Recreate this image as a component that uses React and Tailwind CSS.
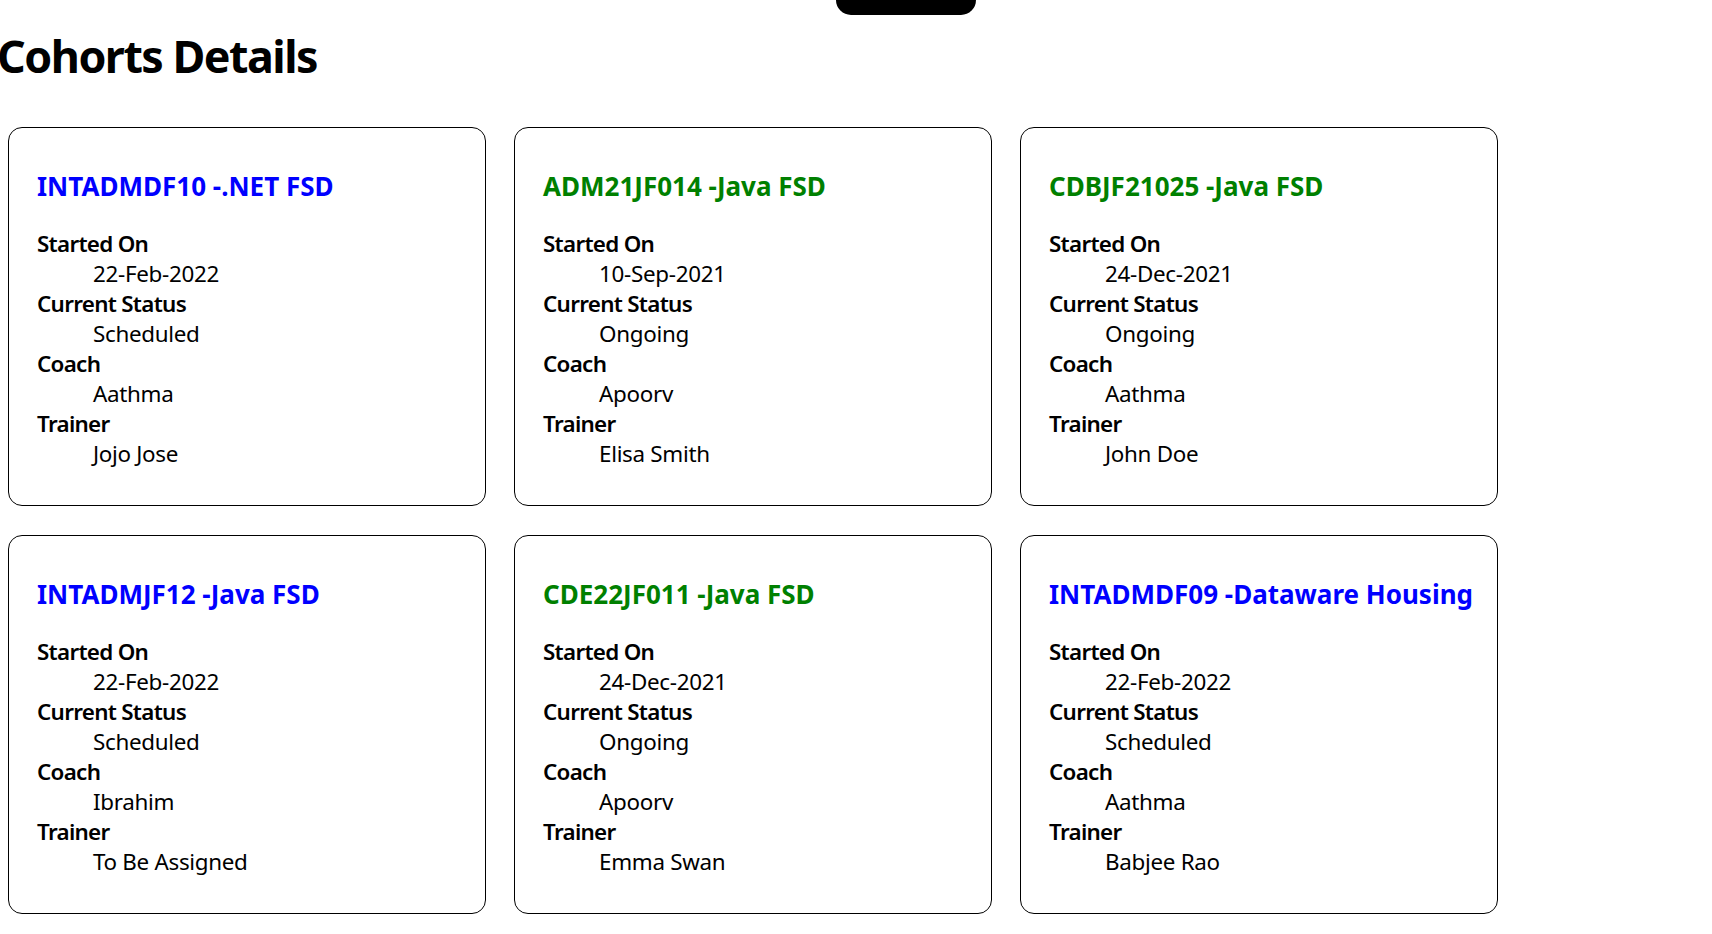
import React from 'react';

// Danh sách các cohort hiển thị trên trang
const cohorts = [
  { code: 'INTADMDF10', technology: '.NET FSD', startedOn: '22-Feb-2022', status: 'Scheduled', coach: 'Aathma', trainer: 'Jojo Jose' },
  { code: 'ADM21JF014', technology: 'Java FSD', startedOn: '10-Sep-2021', status: 'Ongoing', coach: 'Apoorv', trainer: 'Elisa Smith' },
  { code: 'CDBJF21025', technology: 'Java FSD', startedOn: '24-Dec-2021', status: 'Ongoing', coach: 'Aathma', trainer: 'John Doe' },
  { code: 'INTADMJF12', technology: 'Java FSD', startedOn: '22-Feb-2022', status: 'Scheduled', coach: 'Ibrahim', trainer: 'To Be Assigned' },
  { code: 'CDE22JF011', technology: 'Java FSD', startedOn: '24-Dec-2021', status: 'Ongoing', coach: 'Apoorv', trainer: 'Emma Swan' },
  { code: 'INTADMDF09', technology: 'Dataware Housing', startedOn: '22-Feb-2022', status: 'Scheduled', coach: 'Aathma', trainer: 'Babjee Rao' },
];

function CohortCard({ cohort }) {
  // Đang diễn ra -> xanh lá, còn lại -> xanh dương
  const titleColor = cohort.status === 'Ongoing' ? 'text-[#008000]' : 'text-[#0000ff]';

  const rows = [
    { label: 'Started On', value: cohort.startedOn },
    { label: 'Current Status', value: cohort.status },
    { label: 'Coach', value: cohort.coach },
    { label: 'Trainer', value: cohort.trainer },
  ];

  return (
    <div className="border border-black rounded-[14px] pt-[41px] pb-[36px] pl-[28px] pr-[20px]">
      <h3 className={`whitespace-nowrap text-[26px] font-bold leading-[35px] ${titleColor}`}>
        {cohort.code} -{cohort.technology}
      </h3>
      <dl className="mt-[25px] text-[22.4px] leading-[30px]">
        {rows.map((row) => (
          <div key={row.label}>
            <dt className="font-semibold tracking-[-0.7px]">{row.label}</dt>
            <dd className="ml-[56px] tracking-[-0.3px]">{row.value}</dd>
          </div>
        ))}
      </dl>
    </div>
  );
}

export default function App() {
  return (
    <div className="min-h-screen overflow-hidden bg-white text-black font-['Noto_Sans','Open_Sans',sans-serif]">
      {/* nút đen phía trên (bị cắt) */}
      <div className="ml-[836px] h-[15px] w-[140px] rounded-b-[15px] bg-black"></div>

      <h1 className="-ml-[3px] mt-[11px] text-[44.8px] font-bold leading-[60px] tracking-[-1.5px]">Cohorts Details</h1>

      {/* LƯỚI CÁC CARD */}
      <div className="mt-[41px] pl-[8px] grid grid-cols-[repeat(3,478px)] gap-x-[28px] gap-y-[29px]">
        {cohorts.map((cohort) => (
          <CohortCard key={cohort.code} cohort={cohort} />
        ))}
      </div>
    </div>
  );
}
